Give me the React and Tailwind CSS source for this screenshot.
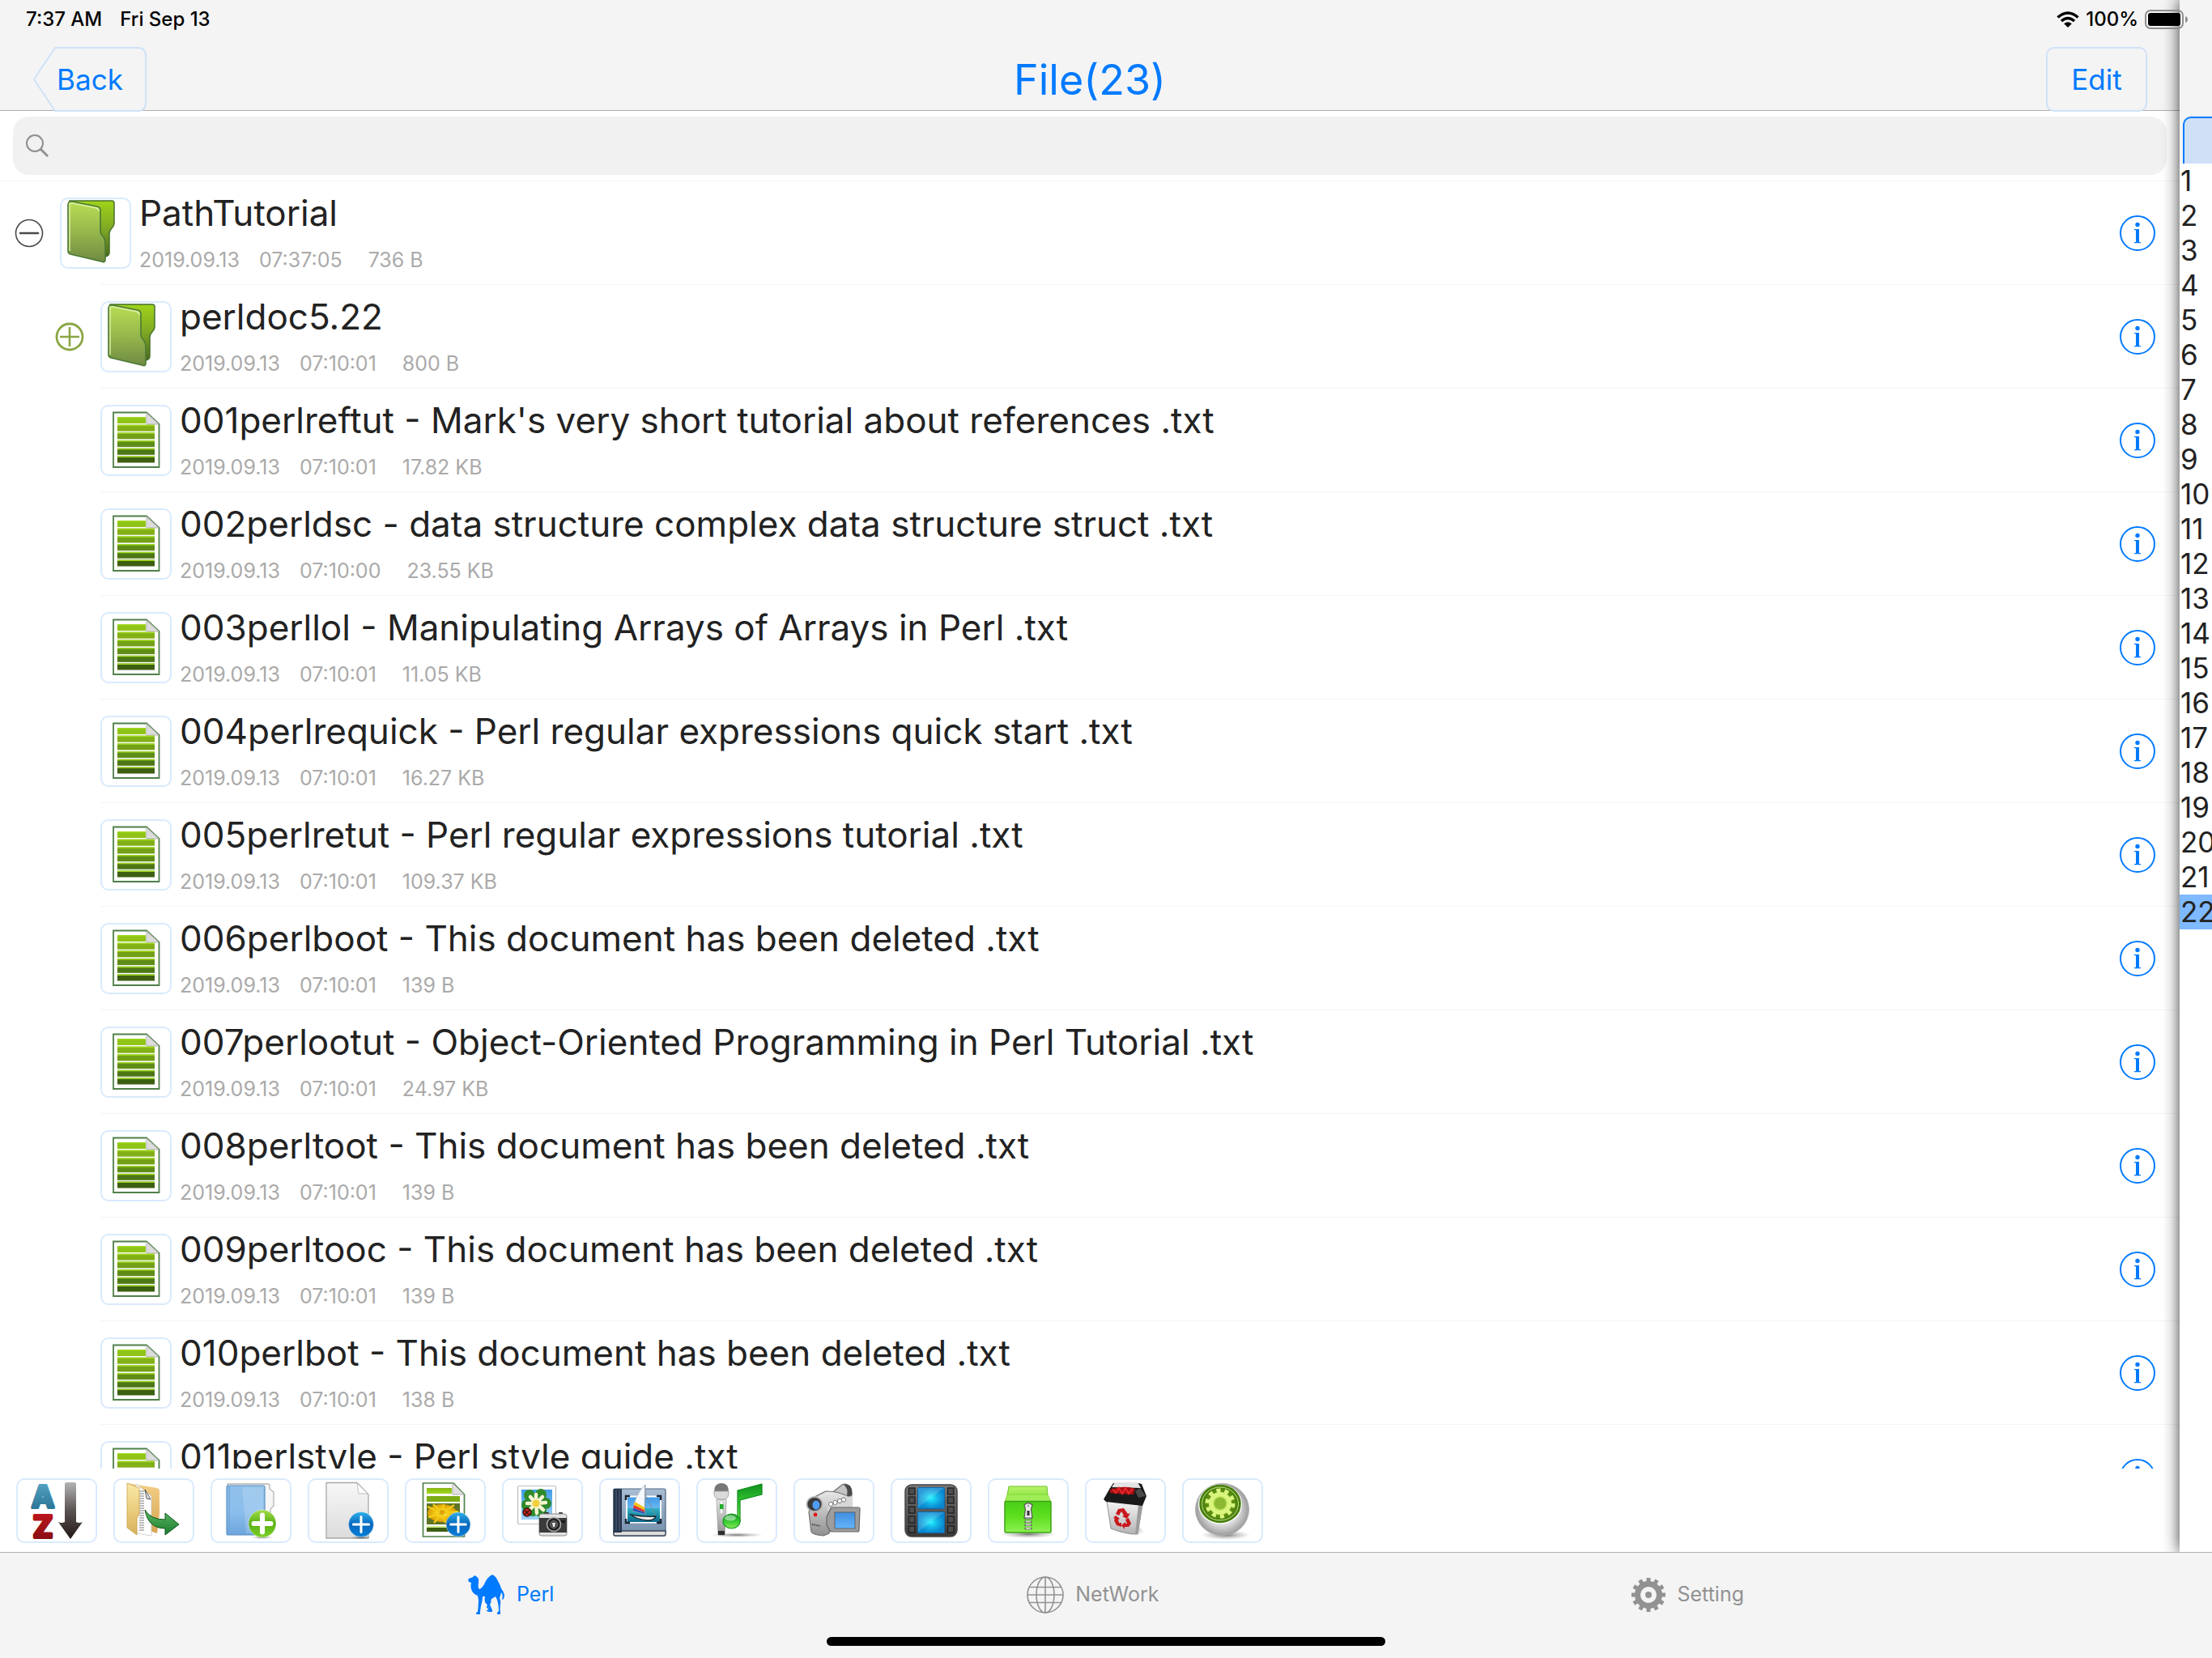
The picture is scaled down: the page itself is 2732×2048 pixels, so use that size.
import { useState } from "react"

const files = [
  { name: "PathTutorial", time: "07:37:05", size: "736 B", type: "folder", open: true, root: true },
  { name: "perldoc5.22", time: "07:10:01", size: "800 B", type: "folder" },
  { name: "001perlreftut - Mark's very short tutorial about references .txt", time: "07:10:01", size: "17.82 KB" },
  { name: "002perldsc - data structure complex data structure struct .txt", time: "07:10:00", size: "23.55 KB" },
  { name: "003perllol - Manipulating Arrays of Arrays in Perl .txt", time: "07:10:01", size: "11.05 KB" },
  { name: "004perlrequick - Perl regular expressions quick start .txt", time: "07:10:01", size: "16.27 KB" },
  { name: "005perlretut - Perl regular expressions tutorial .txt", time: "07:10:01", size: "109.37 KB" },
  { name: "006perlboot - This document has been deleted .txt", time: "07:10:01", size: "139 B" },
  { name: "007perlootut - Object-Oriented Programming in Perl Tutorial .txt", time: "07:10:01", size: "24.97 KB" },
  { name: "008perltoot - This document has been deleted .txt", time: "07:10:01", size: "139 B" },
  { name: "009perltooc - This document has been deleted .txt", time: "07:10:01", size: "139 B" },
  { name: "010perlbot - This document has been deleted .txt", time: "07:10:01", size: "138 B" },
  { name: "011perlstyle - Perl style guide .txt", time: "07:10:01", size: "14.36 KB" },
]

const lines = Array.from({ length: 22 }, (_, i) => i + 1)

// shared gradients, referenced by id from every icon
function Gradients() {
  const v = (id, ...stops) => (
    <linearGradient key={id} id={id} x1="0" y1="0" x2="0" y2="1">
      {stops.map((c, i) => <stop key={i} offset={i / (stops.length - 1)} stopColor={c} />)}
    </linearGradient>
  )
  const r = (id, ...stops) => (
    <radialGradient key={id} id={id}>
      {stops.map((c, i) => <stop key={i} offset={i / (stops.length - 1)} stopColor={c} />)}
    </radialGradient>
  )
  return (
    <svg className="absolute size-0" aria-hidden="true">
      <defs>
        {v("folderFront", "#b8de55", "#96b84c", "#6f8a42")}
        {v("folderBack", "#9fd31a", "#7fa824", "#4c6a1c")}
        {v("letterA", "#5aa9c9", "#236c8e")}
        {v("letterZ", "#c8171c", "#7c0d12")}
        {v("sortArrow", "#b4b4b4", "#5a5352", "#231815")}
        {v("manilla", "#fbe9a6", "#d9b25a")}
        {v("manillaBack", "#f3cf85", "#d9a552")}
        {v("greenArrow", "#5cb865", "#1b7a2c")}
        {v("blueFolder", "#8fc0ea", "#8dbfed", "#6da5dc")}
        {v("page", "#f7f7f7", "#dcdcdc")}
        {v("greenBall", "#a5dd4c", "#58b012", "#7fd02a")}
        {v("blueBall", "#2fb0ea", "#0567bd", "#0a7fd6")}
        {v("barLight", "#86b512", "#a3d820")}
        {v("sky", "#3f9be8", "#9fd4f7")}
        {v("sea", "#2fb3c4", "#0c6a8c")}
        {v("album", "#a9bdd2", "#7590ad")}
        {v("steel", "#e8e8e8", "#8f8f8f")}
        {v("note", "#0f8f1e", "#35c832", "#8aec5a")}
        {v("film", "#777777", "#3a3a3a")}
        {v("boxFront", "#49cf18", "#5fe01f", "#8df052")}
        {v("boxTop", "#b9f36c", "#93e84a")}
        {v("bin", "#f4f4f4", "#b4b4b4")}
        {v("screen", "#3f8fe0", "#63b3fb")}
        {r("filmGlow", "#24f2ff", "#14b4e6", "#0b86cf")}
        {r("petal", "#fff27a", "#f4c70e", "#d59a08")}
        {r("sphere", "#ffffff", "#f2f2f2", "#d4d4d4", "#9b9b9b")}
        {r("gearDisc", "#8fbb2b", "#6b9c16", "#3f7607")}
        {r("shade", "#00000088", "#00000033", "#00000000")}
      </defs>
    </svg>
  )
}

function FolderIcon() {
  return (
    <svg viewBox="2 2 84 84" className="size-full" aria-hidden="true">
      <path d="M12 4H64Q67 4 67 7V32Q67 35 64 38Q61 41 61 44V68Q61 72 56 73L14 66Z" fill="url(#folderBack)" stroke="#46702a" strokeWidth="1.5" />
      <path d="M10 9Q10 4 15 5L46 11Q50 12 50 16V42Q50 45 53 48Q56 51 56 55V77Q56 81 51 79L13 70Q10 69 10 66Z" fill="url(#folderFront)" stroke="#4b7a35" strokeWidth="1.6" />
      <path d="M12 66V8Q13 6.500 16 7L45 13Q48 14 48 17" fill="none" stroke="#dff0a8" strokeWidth="1.4" />
    </svg>
  )
}

const bars = ["#8fc416", "#82b017", "#73a017", "#5f8c18", "#4d7716", "#3d5f12"]

function DocIcon() {
  return (
    <svg viewBox="2 2 84 84" className="size-full" aria-hidden="true">
      <path d="M16 9.500H57L72.500 24V77H16Z" fill="#fdfdfd" stroke="#4f8049" strokeWidth="1.8" />
      <path d="M57 10V24H72Z" fill="#dcdcdc" stroke="#b5b5b5" strokeWidth="1" />
      {bars.map((c, i) => (
        <g key={c}>
          <rect x="21" y={15 + i * 9.7} width={i === 0 ? 35 : 46} height="8" fill={c} />
          <rect x="21" y={15 + i * 9.7} width={i === 0 ? 35 : 46} height="1.500" fill="#9fd81c" />
        </g>
      ))}
    </svg>
  )
}

function InfoIcon() {
  return (
    <svg viewBox="0 0 44 44" className="size-11" fill="none" aria-hidden="true">
      <circle cx="22" cy="22" r="21" stroke="#007aff" strokeWidth="2" />
      <circle cx="22" cy="11.500" r="2.700" fill="#007aff" />
      <path d="M18 17H24V33H26V34.200H18V33H20V18.200H18Z" fill="#007aff" />
    </svg>
  )
}

function ExpandIcon({ open }) {
  return open ? (
    <svg viewBox="0 0 36 36" className="size-9" fill="none" stroke="#4a4a4a" aria-hidden="true">
      <circle cx="18" cy="18" r="16.500" strokeWidth="1.600" />
      <path d="M7 18H29" strokeWidth="2.600" strokeLinecap="round" />
    </svg>
  ) : (
    <svg viewBox="0 0 36 36" className="size-9" fill="none" stroke="#8aa644" aria-hidden="true">
      <circle cx="18" cy="18" r="16" strokeWidth="2.800" />
      <path d="M6 18H30M18 6V30" strokeWidth="2.600" />
    </svg>
  )
}

function Plus({ cx, cy, r, fill }) {
  const a = r * 0.62
  return (
    <g>
      <circle cx={cx} cy={cy} r={r} fill={fill} stroke="#ffffff66" strokeWidth="1" />
      <path d={`M${cx - a} ${cy}H${cx + a}M${cx} ${cy - a}V${cy + a}`} stroke="#fff" strokeLinecap="round" strokeWidth={fill === "url(#greenBall)" ? 6 : 3} />
    </g>
  )
}

const tools = [
  ["Sort", (
    <g>
      <text x="33" y="36" textAnchor="middle" fontFamily="Inter" fontWeight="700" fontSize="37" fill="url(#letterA)" stroke="url(#letterA)" strokeWidth="4" strokeLinejoin="round">A</text>
      <text x="33" y="73" textAnchor="middle" fontFamily="Inter" fontWeight="700" fontSize="37" fill="url(#letterZ)" stroke="url(#letterZ)" strokeWidth="4" strokeLinejoin="round">Z</text>
      <path d="M60 7Q60 5 62 5H72Q74 5 74 7V54Q78 56 82 54L67 75L52 54Q56 56 60 54Z" fill="url(#sortArrow)" />
    </g>
  )],
  ["Move", (
    <g>
      <path d="M17 6L54 12Q57 13 57 15V44L54 68L30 60Z" fill="url(#manillaBack)" />
      <path d="M28 7L47 22V71L29 68Z" fill="#fff" stroke="#c4c4c4" strokeWidth="0.8" />
      <path d="M32 16H38M32 19H38M32 22H38M32 25H38M32 28H38M32 31H38M32 34H38M32 37H38M32 40H38M32 43H38M32 46H38M32 49H38M32 52H38M32 55H38M32 58H38M32 61H38M32 64H38" stroke="#a6a6a6" strokeWidth="1.4" />
      <path d="M39 14L41 25L46 26Z" fill="#e4e4e4" stroke="#333" strokeWidth="0.800" />
      <path d="M17 6L32 12V44L29 50V70L17 61Z" fill="url(#manilla)" stroke="#c9a24e" strokeWidth="0.800" />
      <path d="M39 39Q46 51 64 51V43L81 57L64 70V62Q43 62 39 39Z" fill="url(#greenArrow)" stroke="#12561d" strokeWidth="1" />
    </g>
  )],
  ["New folder", (
    <g>
      <path d="M21 7H71Q73 7 73 9V13L78 17V34L74 38V66H26Z" fill="#f6f6f6" stroke="#b5b5b5" strokeWidth="1.300" />
      <rect x="20" y="9" width="47" height="61" rx="2" fill="url(#blueFolder)" stroke="#5b8fc4" strokeWidth="1.200" />
      <path d="M39 11H65V68H44Z" fill="#ffffff2a" />
      <path d="M23 10V69" stroke="#6fa4d8" strokeWidth="1.500" />
      <ellipse cx="64" cy="73" rx="14" ry="2" fill="url(#shade)" />
      <Plus cx={64} cy={56} r={17} fill="url(#greenBall)" />
    </g>
  )],
  ["New file", (
    <g>
      <path d="M23 5.500H61L75 20V74H23Z" fill="url(#page)" stroke="#a8a8a8" strokeWidth="1.300" />
      <path d="M61 6L63 19H74Z" fill="#fff" stroke="#b8b8b8" strokeWidth="0.900" />
      <ellipse cx="66" cy="73" rx="12" ry="2.500" fill="url(#shade)" />
      <Plus cx={66} cy={57} r={15.5} fill="url(#blueBall)" />
    </g>
  )],
  ["New rich text", (
    <g>
      <path d="M22.500 6H60L73.500 20V72H22.500Z" fill="#fdfdfd" stroke="#4f8049" strokeWidth="1.700" />
      <path d="M59 6V20H73Z" fill="#e0e0e0" stroke="#aaa" strokeWidth="0.900" />
      <rect x="27" y="12" width="31" height="7" fill="url(#barLight)" />
      <rect x="27" y="22" width="41" height="7" fill="#7dab15" />
      <rect x="27" y="31" width="41" height="26" fill="#5d7326" />
      <ellipse cx="46" cy="43" rx="18" ry="11" fill="url(#petal)" />
      <path d="M46 43L28 35M46 43L35 32M46 43L48 32M46 43L61 33M46 43L66 41M46 43L29 48M46 43L36 55M46 43L50 55" stroke="#f2cb18" strokeWidth="2.400" />
      <circle cx="46" cy="42" r="3" fill="#dca30a" />
      <path d="M27 61H68V66H27Z" fill="#3d5f12" />
      <path d="M27 60H60" stroke="#9fd81c" strokeWidth="1.200" />
      <Plus cx={66} cy={57} r={15} fill="url(#blueBall)" />
    </g>
  )],
  ["Take photo", (
    <g>
      <rect x="19.500" y="9.500" width="47" height="47" rx="2" fill="#fdfdfd" stroke="#c0c0c0" strokeWidth="1.200" />
      <rect x="24" y="14" width="38" height="37" fill="url(#sky)" />
      <g fill="#2f8a2b">
        <circle cx="34" cy="21" r="7" /><circle cx="48" cy="20" r="7" /><circle cx="54" cy="31" r="7" />
        <circle cx="31" cy="33" r="7" /><circle cx="48" cy="41" r="7" /><circle cx="38" cy="40" r="7" />
      </g>
      <path d="M42 31L42 20M42 31L50 23M42 31L54 30M42 31L51 39M42 31L43 43M42 31L34 39M42 31L31 31M42 31L35 23" stroke="#f6f4d0" strokeWidth="4.500" strokeLinecap="round" />
      <circle cx="42" cy="31" r="4.500" fill="#f3cf3a" />
      <circle cx="31" cy="42" r="5" fill="#c9241b" stroke="#3a1512" strokeWidth="1.400" />
      <path d="M28 40L34 45M34 39L28 45" stroke="#3a1512" strokeWidth="1.300" />
      <rect x="52" y="42" width="6" height="4" rx="1" fill="#333" />
      <rect x="70" y="42" width="5" height="3" rx="1" fill="#333" />
      <rect x="46" y="44" width="34" height="27" rx="3" fill="#e2e2e2" stroke="#8a8a8a" strokeWidth="1" />
      <rect x="46" y="49" width="34" height="18" fill="#3b3b3b" />
      <circle cx="64" cy="57" r="8.500" fill="#222" stroke="#aaa" strokeWidth="1.600" />
      <circle cx="64" cy="57" r="4.500" fill="#4a4a4a" stroke="#777" strokeWidth="1" />
      <path d="M62 55H66L65 60H63Z" fill="#eee" />
      <rect x="73" y="52" width="5" height="3" fill="#1a1a1a" />
    </g>
  )],
  ["Photo album", (
    <g>
      <rect x="18" y="13" width="64" height="58" rx="2" fill="url(#album)" stroke="#4f6783" strokeWidth="1.200" />
      <path d="M18 65H82V69Q82 71 80 71H20Q18 71 18 69Z" fill="#dcdcdc" stroke="#3a4657" strokeWidth="1.300" />
      <rect x="17.500" y="13" width="10.500" height="54" rx="1" fill="#26334a" />
      <path d="M21 14V65M25 14V65" stroke="#4a5b78" strokeWidth="1.200" />
      <rect x="34" y="22.500" width="42" height="32" fill="url(#sky)" stroke="#fff" strokeWidth="2" />
      <rect x="35" y="37" width="40" height="17" fill="url(#sea)" />
      <path d="M33 27V22H38M71 22H76V27M76 50V55H71M38 55H33V50" stroke="#1b2433" strokeWidth="2.500" fill="none" />
      <path d="M56.500 8Q45 20 41 40L56 44Z" fill="#f5f8fb" stroke="#aebccb" strokeWidth="0.700" />
      <path d="M44 29L56 36V39.500L43 33Z" fill="#f0c419" />
      <path d="M43 33L56 39.500V42L42 36.500Z" fill="#e0342a" />
      <path d="M42 36.500L56 42V44L41 40Z" fill="#2a54b8" />
      <path d="M57 8V46M57 20L70 46" stroke="#7d8b99" strokeWidth="0.900" fill="none" />
      <path d="M39 45Q55 48 70 47Q68 52 60 52Q46 51 39 45Z" fill="#f4f4f4" stroke="#1d2b36" strokeWidth="1.500" />
    </g>
  )],
  ["Record audio", (
    <g>
      <ellipse cx="50" cy="70" rx="32" ry="3" fill="url(#shade)" />
      <path d="M25 26H37L35 70H27Z" fill="url(#steel)" stroke="#9a9a9a" strokeWidth="0.800" />
      <rect x="27" y="65" width="8" height="5" fill="#2e2e2e" />
      <path d="M22 17Q22 6 31 6Q40 6 40 17Z" fill="#777" />
      <path d="M22 16H40V19Q40 26 31 26Q22 26 22 19Z" fill="#dadada" stroke="#999" strokeWidth="0.800" />
      <rect x="29" y="27" width="4" height="17" rx="2" fill="#f3f3f3" stroke="#aaa" strokeWidth="0.600" />
      <rect x="29" y="32" width="4.500" height="6" fill="#1fae28" />
      <path d="M51 15L81 7V20L54 27V53H51Z" fill="url(#note)" stroke="#0e8a1c" strokeWidth="1.200" strokeLinejoin="round" />
      <ellipse cx="43.500" cy="53" rx="10.500" ry="9" fill="url(#note)" stroke="#139a1e" strokeWidth="1.200" />
      <ellipse cx="42" cy="49" rx="7" ry="3.500" fill="#ffffff77" />
    </g>
  )],
  ["Record video", (
    <g>
      <path d="M46 19L60 8Q64 6 68 9Q73 13 72 22L60 26Z" fill="#c4c4c4" stroke="#6f6f6f" strokeWidth="1.200" />
      <path d="M62 8Q70 6 72 14V20Q70 24 66 22Q68 12 62 8Z" fill="#4b4b4b" />
      <path d="M24 24L40 16Q58 16 72 25V38L46 44L44 68L37 71Q24 70 22 66L19 42Z" fill="url(#steel)" stroke="#6f6f6f" strokeWidth="1.200" />
      <path d="M42 26L73 22V40H42Z" fill="#d7d7d7" />
      <circle cx="46" cy="32" r="2.600" fill="#fff" stroke="#777" /><circle cx="51.500" cy="30" r="2.600" fill="#fff" stroke="#777" />
      <circle cx="57" cy="28" r="2.600" fill="#fff" stroke="#777" /><circle cx="62" cy="26.500" r="2.600" fill="#fff" stroke="#777" />
      <ellipse cx="26" cy="32" rx="9.500" ry="9" fill="#3a3a3a" stroke="#b2b2b2" strokeWidth="1.800" />
      <ellipse cx="28" cy="33" rx="4.500" ry="5.500" fill="#4f9bf5" />
      <circle cx="27" cy="45" r="2.400" fill="#e01717" />
      <path d="M23 57L33 59" stroke="#444" strokeWidth="2" strokeDasharray="1.500 1.200" />
      <path d="M46 37Q46 36 48 36H80Q82 36 82 38L81 64Q81 66 79 66H46L41 58V48Z" fill="#9d9d9d" stroke="#666" strokeWidth="1.200" />
      <rect x="51" y="42" width="25" height="20" fill="url(#screen)" stroke="#555" strokeWidth="0.800" />
    </g>
  )],
  ["Videos", (
    <g>
      <rect x="18" y="8" width="64" height="64" rx="8" fill="url(#film)" stroke="#474747" strokeWidth="1.500" />
      <rect x="33.500" y="11.500" width="33" height="26" rx="1.500" fill="url(#filmGlow)" stroke="#0e6aa6" strokeWidth="1" />
      <rect x="33.500" y="41.500" width="33" height="26" rx="1.500" fill="url(#filmGlow)" stroke="#0e6aa6" strokeWidth="1" />
      <path d="M34 12H66L34 36ZM34 42H66L34 66Z" fill="#ffffff26" />
      {[12, 23, 35, 47, 59].map(y => (
        <g key={y} fill="#4e4e4e" stroke="#1e1e1e" strokeWidth="1.300">
          <rect x="22.500" y={y} width="7.500" height="8" />
          <rect x="70.500" y={y} width="7.500" height="8" />
        </g>
      ))}
    </g>
  )],
  ["Archive", (
    <g>
      <ellipse cx="50" cy="69" rx="34" ry="5" fill="url(#shade)" />
      <path d="M26 10H73L74 21H24Z" fill="url(#boxTop)" stroke="#6cc227" strokeWidth="1" />
      <path d="M24 20H74L78 29H21Z" fill="#a0ec58" stroke="#7fd433" strokeWidth="0.800" />
      <rect x="21" y="28.500" width="57" height="38.500" rx="1.500" fill="url(#boxFront)" stroke="#3ea315" strokeWidth="1.500" />
      <path d="M50 44V64" stroke="#555" strokeWidth="9" strokeDasharray="2.500 1.700" />
      <path d="M50 44V64" stroke="#cfcfcf" strokeWidth="6.500" strokeDasharray="2 2.200" />
      <path d="M45 33Q50 28 55 33L53.500 38L55 49H45L46.500 38Z" fill="#ececec" stroke="#555" strokeWidth="1.200" />
      <rect x="48.500" y="40" width="3" height="6" fill="#333" />
      <circle cx="50" cy="34" r="1.500" fill="#aaa" />
    </g>
  )],
  ["Trash", (
    <g>
      <path d="M34 64L66 72L74 66L62 56Z" fill="url(#shade)" />
      <path d="M27 28L71 33L65 69Q50 69 32 62Z" fill="url(#bin)" stroke="#8f8f8f" strokeWidth="1" />
      <path d="M66 33L71 33L65 69L62 69Z" fill="#9d9d9d" />
      <path d="M23 26L31 12L35 6H66L70 7L76 22L71 34L26 29Z" fill="#1a1a1a" />
      <path d="M37 5H65L69 12L33 11Z" fill="#e4e4e4" />
      <path d="M31 14Q48 8 62 13L60 20Q46 20 31 18Z" fill="#a80f12" />
      <path d="M34 13L38 18L42 12L46 19L50 12L54 19L59 13" stroke="#e8262a" strokeWidth="2" fill="none" />
      <path d="M68 12L75 22L66 24L62 16Z" fill="#4a4a4a" />
      <g fill="#c8191d">
        <path d="M41 38L48 37L53 44L56 43L52 50L46 47L48 46L45 41L42 46L38 44Z" />
        <path d="M54 49L57 56L54 60H49V63L45 58L50 54V56H52L50 51Z" />
        <path d="M38 46L43 50L41 51L42 55H45V60L39 58L36 52L37 50L35 49Z" />
      </g>
    </g>
  )],
  ["Tool settings", (
    <g>
      <ellipse cx="54" cy="70" rx="30" ry="6" fill="url(#shade)" />
      <ellipse cx="49.500" cy="38.500" rx="33" ry="32" fill="url(#sphere)" stroke="#b0b0b0" strokeWidth="1" />
      <ellipse cx="47" cy="32" rx="27" ry="24.500" fill="#fff" />
      <ellipse cx="47" cy="31.500" rx="25" ry="23" fill="url(#gearDisc)" stroke="#4c8211" strokeWidth="1.600" />
      <ellipse cx="47" cy="31.500" rx="22.500" ry="20.500" fill="none" stroke="#d5eda0" strokeWidth="0.900" />
      <circle cx="47" cy="31" r="14" fill="#d9f57e" />
      <circle cx="47" cy="31" r="16" fill="none" stroke="#d9f57e" strokeWidth="5" strokeDasharray="5.050 5" />
      <circle cx="47" cy="31" r="8" fill="#8cb832" stroke="#b8dc55" strokeWidth="1.500" />
    </g>
  )],
]

function CamelIcon() {
  return (
    <svg viewBox="0 0 46 52" className="h-[52px] w-[46px]" fill="currentColor" aria-hidden="true">
      <path d="M0 7L3 5Q5 5 6 4L8 2L10 3Q14 5 13 11Q12 17 14 19Q17 18 20 13Q23 6 26 4Q29 0 32 2Q35 4 37 9Q40 14 41 18Q44 22 45 26Q45 30 43 32L42 31Q44 27 41 23Q40 27 39 30Q41 34 40 38Q39 43 40 48L40 50H36V48L38 46Q38 38 36 32L34 28Q31 30 29 31Q28 35 27 38L30 45V47H26L23 46V45L27 44L25 40L21 35Q20 31 21 28L18 28Q18 34 16 40L15 47V50H10V48L12 47Q13 38 13 32L12 27Q6 25 4 19Q3 14 4 11L1 10Z" />
      <path d="M28 34L24 41L28 46" fill="none" stroke="currentColor" strokeWidth="2" />
    </svg>
  )
}

function GlobeIcon() {
  return (
    <svg viewBox="0 0 46 46" className="size-[46px]" fill="none" stroke="currentColor" strokeWidth="1.600" aria-hidden="true">
      <circle cx="23" cy="23" r="22" />
      <ellipse cx="23" cy="23" rx="11" ry="22" />
      <path d="M23 1V45M1 23H45M4 13.500H42M4 32.500H42" />
    </svg>
  )
}

function GearIcon() {
  return (
    <svg viewBox="0 0 42 42" className="size-[42px]" fill="none" stroke="currentColor" aria-hidden="true">
      <circle cx="21" cy="21" r="13.500" strokeWidth="7" />
      {[0, 30, 60, 90, 120, 150, 180, 210, 240, 270, 300, 330].map(a => (
        <path key={a} d="M21 0V6" strokeWidth="5" transform={`rotate(${a} 21 21)`} />
      ))}
      <circle cx="21" cy="21" r="4" fill="currentColor" stroke="none" />
    </svg>
  )
}

function StatusBar() {
  return (
    <div className="pointer-events-none absolute inset-x-0 top-0 z-20 flex h-12 items-center justify-between pl-8 pr-[30px] text-[24px] font-medium text-black">
      <div className="flex gap-[22px]">
        <span>7:37 AM</span>
        <span>Fri Sep 13</span>
      </div>
      <div className="flex items-center gap-2">
        <svg viewBox="0 0 28 20" className="h-5 w-7" fill="none" stroke="#000" strokeWidth="3.600" aria-hidden="true">
          <path d="M1.500 7.500Q14 -3.500 26.500 7.500" />
          <path d="M6 12Q14 5 22 12" />
          <path d="M14 20L9.200 15.200Q14 11.500 18.800 15.200Z" fill="#000" stroke="none" />
        </svg>
        <span>100%</span>
        <svg viewBox="0 0 53 24" className="h-6 w-[53px]" aria-hidden="true">
          <rect x="1" y="1" width="46" height="22" rx="6" fill="none" stroke="#8f8f8f" strokeWidth="2" />
          <rect x="4" y="4" width="40" height="16" rx="3" fill="#000" />
          <path d="M50 8Q53 9 53 12Q53 15 50 16Z" fill="#8f8f8f" />
        </svg>
      </div>
    </div>
  )
}

function FileRow({ file }) {
  return (
    <li>
      <div className={`flex h-[127px] items-center pr-[30px] ${file.root ? "pl-[18px]" : "pl-[68px]"}`}>
        {file.type === "folder" ? (
          <button type="button" aria-label={file.open ? "Collapse" : "Expand"} className="mr-5">
            <ExpandIcon open={file.open} />
          </button>
        ) : (
          <span className="mr-5 w-9" />
        )}
        <div className="mr-2.5 size-[88px] rounded-[10px] border-2 border-[#d9eafd]">
          {file.type === "folder" ? <FolderIcon /> : <DocIcon />}
        </div>
        <div className="flex-1 pt-2 leading-[58px] whitespace-nowrap">
          <div className="text-[44px] text-[#222]">{file.name}</div>
          <div className="flex text-[25px] text-[#aaa]">
            <span>2019.09.13</span>
            <span className="ml-6">{file.time}</span>
            <span className="ml-8">{file.size}</span>
          </div>
        </div>
        <button type="button" aria-label={`Info about ${file.name}`}>
          <InfoIcon />
        </button>
      </div>
      <div className="ml-[124px] h-px bg-[#f4f4f4]" />
    </li>
  )
}

export default function App() {
  const [query, setQuery] = useState("")
  const [tab, setTab] = useState("Perl")
  const [line, setLine] = useState(22)

  const tabs = [["Perl", <CamelIcon />], ["NetWork", <GlobeIcon />], ["Setting", <GearIcon />]]

  return (
    <div className="relative flex h-screen flex-col overflow-hidden bg-white font-['Inter','Liberation_Sans',sans-serif]">
      <Gradients />
      <StatusBar />

      <div className="flex min-h-0 flex-1 overflow-hidden">
        <main className="flex min-w-0 flex-1 flex-col">
          <header className="grid h-[137px] grid-cols-[1fr_auto_1fr] items-end border-b border-[#aeaeae] bg-[#f4f4f4] px-10">
            <button type="button" className="relative -mb-0.5 h-20 w-[142px] text-[35px] text-[#007aff]">
              <svg viewBox="0 0 142 80" className="absolute inset-0" fill="none" aria-hidden="true">
                <path d="M28 1H130Q140 1 140 11V69Q140 79 130 79H28L2 40Z" stroke="#cfe2f7" strokeWidth="2" />
              </svg>
              <span className="relative">Back</span>
            </button>
            <h1 className="text-[52px] leading-[74px] text-[#007aff]">File(23)</h1>
            <button type="button" className="-mb-0.5 h-20 w-[125px] justify-self-end rounded-[10px] border-2 border-[#cfe2f7] text-[35px] text-[#007aff]">
              Edit
            </button>
          </header>

          <div className="border-b border-[#f4f4f4] px-4 py-[7px]">
            <label className="flex h-[72px] items-center rounded-[20px] bg-[#f1f1f1] px-4">
              <svg viewBox="0 0 28 28" className="size-7" fill="none" stroke="#8e8e93" aria-hidden="true">
                <circle cx="11" cy="11" r="10" strokeWidth="2" />
                <path d="M18 18L27 27" strokeWidth="2.800" />
              </svg>
              <input
                type="search" aria-label="Search files"
                className="ml-3 h-full flex-1 bg-transparent text-[35px] focus:outline-none"
                value={query}
                onChange={e => setQuery(e.target.value)}
              />
            </label>
          </div>

          <ul className="min-h-0 flex-1 overflow-hidden">
            {files.map(f => <FileRow key={f.name} file={f} />)}
          </ul>

          <div className="flex gap-5 px-5 pt-3 pb-[11px]">
            {tools.map(([label, icon]) => (
              <button key={label} type="button" aria-label={label}
                className="h-20 w-[100px] rounded-[10px] border-2 border-[#d9eafd]">
                <svg viewBox="2 2 96 76" className="size-full" aria-hidden="true">{icon}</svg>
              </button>
            ))}
          </div>
        </main>

        <aside className="relative z-10 w-10 bg-white shadow-[0_0_20px_rgba(0,0,0,0.8)]">
          <div className="flex h-[202px] items-end bg-[#f4f4f4] pl-1">
            <div className="h-[58px] flex-1 rounded-tl-[10px] border-t-2 border-l-2 border-[#007aff] bg-[#cfe0f7]" />
          </div>
          <div className="flex flex-col overflow-hidden">
            {lines.map(n => (
              <button key={n} type="button" onClick={() => setLine(n)}
                className={`h-[43px] pl-px text-left text-[35px] leading-[43px] text-[#222] ${n === line ? "bg-[#7fb9ff]" : ""}`}>
                {n}
              </button>
            ))}
          </div>
        </aside>
      </div>

      <footer className="relative z-10 flex h-[131px] flex-col items-center border-t border-[#aeaeae] bg-[#f4f4f4]">
        <nav className="flex h-[104px] w-full max-w-[1576px] items-center justify-between">
          {tabs.map(([label, icon]) => (
            <button key={label} type="button" onClick={() => setTab(label)}
              className={`flex items-center gap-3.5 text-[25px] ${tab === label ? "text-[#007aff]" : "text-[#929292]"}`}>
              {icon}
              {label}
            </button>
          ))}
        </nav>
        <div className="h-[11px] w-[690px] rounded-full bg-black" />
      </footer>
    </div>
  )
}
